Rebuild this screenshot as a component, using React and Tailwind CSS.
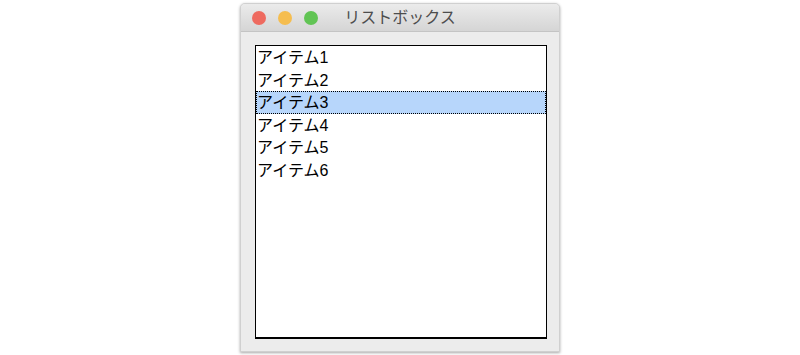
export default function App() {
  const items = ["アイテム1", "アイテム2", "アイテム3", "アイテム4", "アイテム5", "アイテム6"];
  return (
    <div className="w-[800px] h-[355px] bg-white flex justify-center pt-[3px]" style={{ fontFamily: '"Liberation Sans", "Noto Sans CJK JP", sans-serif' }}>
      <div className="w-[320px] h-[349px] flex flex-col rounded-t-[5px] border border-[#d0d0d0] bg-[#ececec] shadow-[0_1px_3px_rgba(0,0,0,0.35)] overflow-hidden">
        <div className="h-[28px] flex items-center relative bg-gradient-to-b from-[#ebebeb] to-[#d5d5d5] border-b border-[#c4c4c4]">
          <div className="flex gap-[12px] pl-[11px]">
            <span className="w-[14px] h-[14px] rounded-full bg-[#ee6a5f]"></span>
            <span className="w-[14px] h-[14px] rounded-full bg-[#f5bd4f]"></span>
            <span className="w-[14px] h-[14px] rounded-full bg-[#61c454]"></span>
          </div>
          <div className="absolute inset-0 flex items-center justify-center text-[16px] text-[#4d4d4d]">リストボックス</div>
        </div>
        <div className="flex-1 pl-[14px] pr-[12px] pt-[13px] pb-[12px]">
          <div className="h-full bg-white border border-black border-b-2">
            {items.map((t, i) => (
              <div
                key={t}
                className={
                  "h-[22.6px] leading-[23px] text-[16px] text-black pl-[1px] " +
                  (i === 2 ? "bg-[#b7d6fb] outline-1 outline-dotted outline-black -outline-offset-1" : "")
                }
              >
                {t}
              </div>
            ))}
          </div>
        </div>
      </div>
    </div>
  );
}
